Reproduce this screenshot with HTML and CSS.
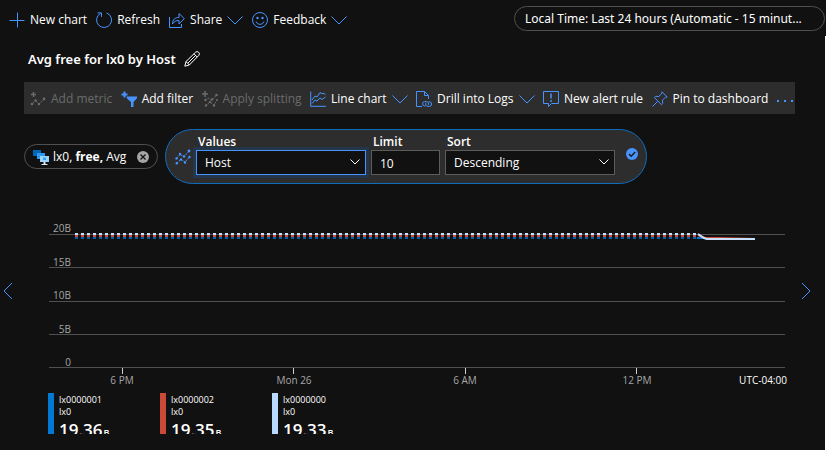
FILE: index.html
```html
<!DOCTYPE html>
<html lang="en">
<head>
<meta charset="utf-8">
<title>Metrics</title>
<link rel="stylesheet" href="styles.css">
</head>
<body>
<svg class="defs" aria-hidden="true">
  <symbol id="chevron" viewBox="0 0 16 16"><path d="M.5 4.500 8 12l7.500-7.500"/></symbol>
  <symbol id="scatter" viewBox="0 0 16 16"><path d="M1.500 9.500 5 5.500l4 2 5-5.500M1.500 14.500 6 10.500l4 2.500 4.500-5" stroke-dasharray="2 1"/><g class="solid"><circle cx="1.500" cy="9.500" r="1.200"/><circle cx="5" cy="5" r="1.200"/><circle cx="9" cy="7.500" r="1.200"/><circle cx="14" cy="2" r="1.400"/><circle cx="1.800" cy="14.300" r="1.200"/><circle cx="6" cy="10.500" r="1.200"/><circle cx="10" cy="13.500" r="1.200"/><circle cx="14.500" cy="8" r="1.200"/></g></symbol>
</svg>

<header class="topbar">
  <nav class="commands">
    <button class="cmd"><svg class="icon" viewBox="0 0 16 16"><path d="M8.500.5v15M.5 8.500h15"/></svg>New chart</button>
    <button class="cmd"><svg class="icon" viewBox="0 0 16 16"><path d="M10.500.9a7.500 7.500 0 1 1-6 .5M1.500.9h4v4"/></svg>Refresh</button>
    <button class="cmd"><svg class="icon" viewBox="0 0 16 16"><path d="M.5 5v10.500h12V12M3.500 12C3.500 7.500 6 5.500 10 5.500v-4l5.300 5.200L10 12V8.500c-3 0-5 1-6.500 3.500z"/></svg>Share<svg class="icon"><use href="#chevron"/></svg></button>
    <button class="cmd"><svg class="icon" viewBox="0 0 16 16"><circle cx="8" cy="8" r="7.500"/><path d="M4 9.500a4.200 4.200 0 0 0 8 0"/><g class="solid"><circle cx="5.500" cy="6" r="1.200"/><circle cx="10.500" cy="6" r="1.200"/></g></svg>Feedback<svg class="icon"><use href="#chevron"/></svg></button>
  </nav>
  <button class="time">Local Time: Last 24 hours (Automatic - 15 minut...</button>
</header>

<main class="panel">
  <div class="heading">
    <h1>Avg free for lx0 by Host</h1>
    <button class="edit" aria-label="Edit title"><svg class="icon" viewBox="0 0 16 16"><path d="m.8 15.200 1.200-4.700L11.500 1.300a2.200 2.200 0 0 1 3.200 3.200L5.300 14zM2 10.500 5.300 14M10 2.800 13.200 6M4 12 12 4"/></svg></button>
  </div>

  <div class="toolbar">
    <button class="cmd" disabled><svg class="icon" viewBox="0 0 16 16"><path d="M3.500 1v5M1 3.500h5" stroke-width="1.500"/><path d="m2 13 3.500-3.500L9 13l5-5" stroke-dasharray="3 1"/><g class="solid"><circle cx="2" cy="13" r="1.300"/><circle cx="5.500" cy="9.500" r="1.300"/><circle cx="9" cy="13" r="1.300"/><circle cx="14" cy="8" r="1.400"/></g></svg>Add metric</button>
    <button class="cmd"><svg class="icon" viewBox="0 0 16 16"><path d="M3.500.5v6M.5 3.500h6" stroke-width="2"/><path class="solid" d="M5.500 5.500H16v1.800L12.500 11v5H10v-5L6 7.500z"/></svg>Add filter</button>
    <button class="cmd" disabled><svg class="icon" viewBox="0 0 16 16"><path d="M3 0v6M0 3h6" stroke-width="1.500"/><path d="m3 9 3-2 4 2 4.500-5M4 14.500 8 11l4 3 3-5" stroke-dasharray="2 1"/><g class="solid"><circle cx="3.500" cy="9" r="1.200"/><circle cx="10" cy="8.500" r="1.200"/><circle cx="14.500" cy="4" r="1.300"/><circle cx="4" cy="14.500" r="1.200"/><circle cx="8" cy="11" r="1.200"/><circle cx="12" cy="14.500" r="1.200"/><circle cx="15" cy="9" r="1"/></g></svg>Apply splitting</button>
    <button class="cmd"><svg class="icon" viewBox="0 0 16 16"><path d="M.7.500v14.800H16M2 9l3-4 2 1 3-4.500L12 3l1-1 2.500 1.500M2 12.500 5 9l2 1 3-3 2 1.500L15.500 6"/></svg>Line chart<svg class="icon"><use href="#chevron"/></svg></button>
    <button class="cmd"><svg class="icon" viewBox="0 0 16 16"><path d="M6 15.500H.5V.5h8l4 4V8M8.500.5v4h4"/><path d="M9.500 15H8.800a2.200 2.200 0 0 1 0-4.400h1.700a2.100 2.100 0 0 1 1.500 3.600M12.700 10.800h.6a2.300 2.300 0 0 1 0 4.600h-1.600a2.200 2.200 0 0 1-1.500-3.700"/></svg>Drill into Logs<svg class="icon"><use href="#chevron"/></svg></button>
    <button class="cmd"><svg class="icon" viewBox="0 0 16 16"><path d="M.5.500h15v12H8.500L5.500 15.500v-3h-5z"/><path d="M8 2.500v5M8 9v2" stroke-width="1.500"/></svg>New alert rule</button>
    <button class="cmd"><svg class="icon" viewBox="0 0 16 16"><path d="m.5 15.500 5-5M10 .8 15.200 6l-2 .4-2.700 2.800.2 3.300-1.200 1.200L2.300 6.500l1.200-1.200 3.300.2 2.800-2.700z"/></svg>Pin to dashboard</button>
    <button class="cmd" aria-label="More"><svg class="icon" viewBox="0 0 16 16"><path class="solid" d="M0 9h2v2H0zM7 9h2v2H7zM14 9h2v2h-2z"/></svg></button>
  </div>

  <div class="filters">
    <div class="metric">
      <svg class="icon plain" viewBox="0 0 16 16"><path fill="#0067b8" d="M0 1h8v6H0z"/><path fill="#2b9af0" d="M4 4h8v6H4z"/><path fill="#9bd3ff" d="M7 7h9v6H7z"/><path fill="#d8e6f0" d="M10.500 13h2v2h2v1h-6v-1h2z"/><path fill="#3aa0f0" d="M10 8.500h3V11h-3z"/></svg>
      <span>lx0, <b>free,</b> Avg</span>
      <button class="remove" aria-label="Remove metric"><svg viewBox="0 0 12 12"><circle cx="6" cy="6" r="6" fill="#a6a6a6"/><path d="m3.500 3.500 5 5m0-5-5 5" stroke="#111" stroke-width="1.200"/></svg></button>
    </div>
    <form class="split">
      <svg class="icon"><use href="#scatter"/></svg>
      <div class="field wide">
        <label for="values">Values</label>
        <div class="control active"><select id="values"><option>Host</option></select><svg class="caret" viewBox="0 0 10 10"><path d="M.5 2.500 5 7l4.500-4.500"/></svg></div>
      </div>
      <div class="field">
        <label for="limit">Limit</label>
        <input id="limit" type="text" value="10">
      </div>
      <div class="field wide">
        <label for="sort">Sort</label>
        <div class="control"><select id="sort"><option>Descending</option></select><svg class="caret" viewBox="0 0 10 10"><path d="M.5 2.500 5 7l4.500-4.500"/></svg></div>
      </div>
      <button class="apply" type="button" aria-label="Apply"><svg viewBox="0 0 12 12"><circle cx="6" cy="6" r="6" fill="#4894fe"/><path d="m3 6 2.200 2.200L9.200 4" stroke="#1b1a19" stroke-width="1.500"/></svg></button>
    </form>
  </div>

  <section class="chart">
    <button class="page" aria-label="Earlier"><svg viewBox="0 0 10 18"><path d="M9 1 1 9l8 8"/></svg></button>
    <svg class="plot" viewBox="0 0 740 170" role="img" aria-label="Average free by host">
      <path class="grid" d="M0 14.500h736M0 47.500h736M0 81.500h736M0 114.500h736M0 147.500h736"/>
      <path class="ticks" d="M73.500 148v6M244.500 148v6M416.500 148v6M587.500 148v6"/>
      <g class="ylabels"><text x="22" y="12">20B</text><text x="22" y="46">15B</text><text x="22" y="79">10B</text><text x="22" y="113">5B</text><text x="22" y="146">0</text></g>
      <g class="xlabels"><text x="73" y="164">6 PM</text><text x="245" y="164">Mon 26</text><text x="416" y="164">6 AM</text><text x="588" y="164">12 PM</text><text class="zone" x="714" y="164">UTC-04:00</text></g>
      <g class="past"><path stroke="#0063b1" d="M26 18h623"/><path stroke="#c94a38" d="M26 16h623"/><path stroke="#c7e0ff" d="M26 14h623"/></g>
      <g class="series"><path stroke="#0078d4" d="m648 18 7 0 8 1"/><path stroke="#c94a38" d="m649 15 7 3 14 0 36 1"/><path stroke="#c7e0ff" d="m649 14 6 4 3 1h48"/></g>
    </svg>
    <button class="page" aria-label="Later"><svg viewBox="0 0 10 18"><path d="m1 1 8 8-8 8"/></svg></button>
  </section>

  <ul class="legend">
    <li class="blue"><strong>lx0000001</strong><span>lx0</span><p>19.36<small>B</small></p></li>
    <li class="red"><strong>lx0000002</strong><span>lx0</span><p>19.35<small>B</small></p></li>
    <li class="pale"><strong>lx0000000</strong><span>lx0</span><p>19.33<small>B</small></p></li>
  </ul>
</main>
</body>
</html>
```
FILE: styles.css
```css
* { box-sizing: border-box; }
body {
  margin: 0;
  min-height: 100vh;
  display: flex;
  flex-direction: column;
  background: #111;
  color: #fff;
  font: 12px/16px "Open Sans", "Noto Sans", sans-serif;
}
button, input, select { font: inherit; color: inherit; }
button { background: none; border: 0; padding: 0; }
svg { display: block; fill: none; }
.defs { position: absolute; width: 0; height: 0; }
.icon { width: 16px; height: 16px; flex: none; stroke: currentColor; color: #4894fe; overflow: visible; }
.plain { stroke: none; }
.solid { fill: currentColor; stroke: none; }

.topbar { display: flex; justify-content: space-between; height: 36px; padding: 6px 1px 0 9px; }
.commands, .toolbar { display: flex; align-items: center; }
.commands { gap: 9px; height: 27px; }
.cmd { display: flex; align-items: center; gap: 5px; white-space: nowrap; }
.cmd:disabled { color: #6b6b6b; }
.cmd:disabled .icon { color: #6b6b6b; }
.time {
  width: 311px;
  height: 25px;
  padding: 0 10px;
  border: 1px solid #4f4f4f;
  border-radius: 13px;
  font-family: "Noto Sans", sans-serif;
  white-space: nowrap;
  text-align: left;
}

.panel { flex: 1; border-right: 1px solid #fff; }
.heading { display: flex; align-items: center; gap: 8px; height: 46px; padding-left: 28px; }
.heading h1 { margin: 0; font-family: "Noto Sans", sans-serif; font-size: 13px; font-weight: 600; }
.edit .icon { color: #fff; }
.toolbar { justify-content: space-between; height: 32px; margin: 0 30px 0 24px; padding: 1px 2px 0 6px; background: #2d2d2d; }

.filters { display: flex; align-items: center; gap: 7px; margin: 15px 24px 0; }
.metric {
  display: flex;
  align-items: center;
  gap: 4px;
  width: 134px;
  height: 25px;
  padding: 0 8px;
  border: 1px solid #505050;
  border-radius: 13px;
  white-space: nowrap;
}
.remove { margin-left: auto; }
.remove svg, .apply svg { width: 12px; height: 12px; }
.split {
  display: flex;
  align-items: center;
  gap: 5px;
  height: 55px;
  padding: 0 8px 0 9px;
  border: 1px solid #0f6cbd;
  border-radius: 28px;
  background: #2d2d2d;
}
.field { width: 69px; padding-bottom: 5px; }
.wide { width: 170px; }
.field label { display: block; height: 16px; padding-left: 2px; font-weight: 600; }
.control { position: relative; }
.field select, .field input {
  display: block;
  width: 100%;
  height: 25px;
  padding: 2px 8px 0;
  border: 1px solid #5c5c5c;
  border-radius: 0;
  background: #111;
  appearance: none;
}
.active select { border-color: #4894fe; outline: 3px solid #24364b; }
.caret { position: absolute; right: 6px; top: 7px; width: 10px; height: 10px; stroke: #fff; pointer-events: none; }
.apply { margin: 0 0 6px 6px; }

.chart { display: flex; align-items: center; justify-content: space-between; margin-top: 36px; padding: 0 14px 0 3px; }
.page svg { width: 10px; height: 18px; stroke: #4894fe; }
.page { margin-bottom: 28px; }
.plot { flex: 1; min-width: 0; margin: 0 12px 0 36px; font-size: 10px; }
.grid { stroke: #505050; }
.ticks { stroke: #d0d0d0; }
.ylabels { fill: #a6a6a6; text-anchor: end; }
.xlabels { fill: #a6a6a6; text-anchor: middle; }
.xlabels .zone { fill: #fff; }
.past { stroke-width: 2; stroke-dasharray: 3 3; }
.series { stroke-width: 2; }

.legend { display: flex; height: 41px; margin: 3px 0 0 48px; padding: 0; overflow: hidden; list-style: none; font-size: 9px; line-height: 12px; }
.legend li { width: 112px; padding: 1px 0 0 5px; border-left: 6px solid; }
.legend strong, .legend span { display: block; font-weight: 500; }
.legend p { margin: 0; font-size: 17px; font-weight: 600; line-height: 24px; }
.legend small { margin-left: 1px; font-size: 9px; }
.legend .blue { border-color: #0078d4; }
.legend .red { border-color: #c94a38; }
.legend .pale { border-color: #b9daff; }
```
